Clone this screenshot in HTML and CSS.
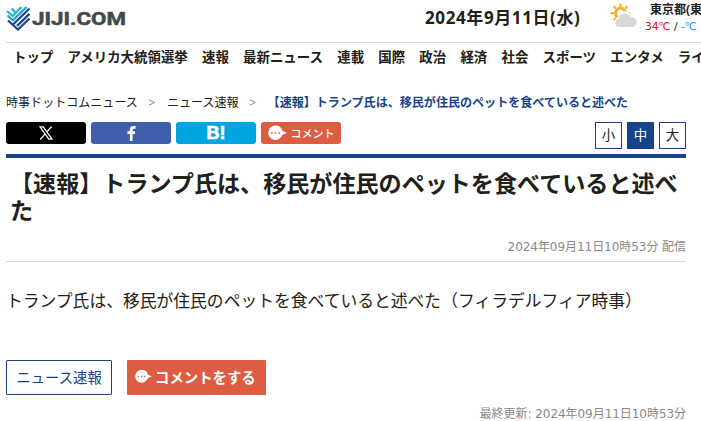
FILE: index.html
```html
<!DOCTYPE html>
<html lang="ja">
<head>
    <meta charset="UTF-8">
    <meta name="viewport" content="width=device-width, initial-scale=1.0">
    <title>【速報】トランプ氏は、移民が住民のペットを食べていると述べた:時事ドットコム</title>
    <link rel="stylesheet" href="styles.css">
</head>
<body>
    <header class="header">
        <a class="logo" href="#">
            <svg width="122" height="26" viewBox="0 0 122 26">
                <g fill="none" stroke-width="2.3">
                    <path stroke="#22b4d0" d="M1 6 L6.5 11 L15.5 2 M5.5 3.5 L9 6.8"/>
                    <path stroke="#20a3c6" d="M1.5 10.5 L7 15.3 L20.5 2"/>
                    <path stroke="#1c4a8d" d="M2 15.5 L12 24.5 L23.5 13.5 M7 19.5 L23.5 3.5 M11 20.8 L23.5 8.8"/>
                </g>
                <text class="logo-text" x="26" y="20" textLength="94" lengthAdjust="spacingAndGlyphs">JIJI.COM</text>
            </svg>
        </a>
        <p class="today">2024年9月11日(水)</p>
        <div class="weather">
            <svg width="28" height="26" viewBox="0 0 28 26">
                <g stroke="#f9ae2b" stroke-width="2">
                    <path d="M10.5 0.5 V4 M10.5 16 V20 M0.5 10.2 H4 M17 10.2 H20.5 M3.5 3.2 L6 5.7 M17.5 3.2 L15 5.7 M3.5 17.2 L6 14.7"/>
                    <circle cx="10.5" cy="10.2" r="5" fill="none" stroke-width="2.8"/>
                </g>
                <path fill="#fff" d="M8 25 A6 6 0 0 1 8 14 A7 7 0 0 1 21 12 A6 6 0 0 1 24 25 Z"/>
                <path fill="#d8d8d8" d="M8.5 24 A4.3 4.3 0 0 1 8.7 15.6 A6.3 6.3 0 0 1 20.8 14.5 A4.8 4.8 0 0 1 23 24 Z"/>
            </svg>
            <div class="weather-info">
                <p class="area">東京都(東京)</p>
                <p class="temp"><span class="high">34℃</span> / <span class="low">-℃</span></p>
            </div>
        </div>
    </header>

    <nav class="nav">
        <a href="#">トップ</a>
        <a href="#">アメリカ大統領選挙</a>
        <a href="#">速報</a>
        <a href="#">最新ニュース</a>
        <a href="#">連載</a>
        <a href="#">国際</a>
        <a href="#">政治</a>
        <a href="#">経済</a>
        <a href="#">社会</a>
        <a href="#">スポーツ</a>
        <a href="#">エンタメ</a>
        <a href="#">ライフ</a>
    </nav>

    <main class="main">
        <div class="breadcrumb">
            <a href="#">時事ドットコムニュース</a>
            <span class="sep">&gt;</span>
            <a href="#">ニュース速報</a>
            <span class="sep">&gt;</span>
            <strong>【速報】トランプ氏は、移民が住民のペットを食べていると述べた</strong>
        </div>

        <div class="tools">
            <div class="share">
                <a class="share-btn x" href="#">
                    <svg width="14" height="14" viewBox="0 0 14 14" fill="none" stroke="#fff" stroke-width="1.2">
                        <path d="M1 0.8 H4.2 L13 13.2 H9.8 Z M12.6 0.5 L7.8 6 M6.2 7.8 L1.2 13.5"/>
                    </svg>
                </a>
                <a class="share-btn facebook" href="#">
                    <svg width="9" height="15" viewBox="0 0 9 15" fill="none" stroke="#fff" stroke-width="2.7">
                        <path d="M8.5 1.4 H6.8 Q4.2 1.4 4.2 4 V15 M0.5 6.7 H8"/>
                    </svg>
                </a>
                <a class="share-btn hatena" href="#">B!</a>
                <a class="share-btn comment" href="#">
                    <svg width="19" height="16" viewBox="0 0 19 16">
                        <path fill="#fff" d="M7.5 0.5 A7.2 7.2 0 0 1 14.5 6 L19 7.7 L14.3 10 A7.2 7.2 0 1 1 7.5 0.5 Z"/>
                        <path stroke="#de5d42" stroke-width="1.6" d="M3 8 H4.6 M6.7 8 H8.3 M10.4 8 H12"/>
                    </svg>
                    コメント
                </a>
            </div>
            <div class="font-size">
                <button>小</button>
                <button class="active">中</button>
                <button>大</button>
            </div>
        </div>

        <article class="article">
            <div class="title-box">
                <h1>【速報】トランプ氏は、移民が住民のペットを食べていると述べた</h1>
                <p class="date">2024年09月11日10時53分 配信</p>
            </div>
            <p class="text">トランプ氏は、移民が住民のペットを食べていると述べた（フィラデルフィア時事）</p>
            <div class="links">
                <a class="category" href="#">ニュース速報</a>
                <a class="post-comment" href="#">
                    <svg width="17" height="15" viewBox="0 0 19 16">
                        <path fill="#fff" d="M7.5 0.5 A7.2 7.2 0 0 1 14.5 6 L19 7.7 L14.3 10 A7.2 7.2 0 1 1 7.5 0.5 Z"/>
                        <path stroke="#de5d42" stroke-width="1.6" d="M3 8 H4.6 M6.7 8 H8.3 M10.4 8 H12"/>
                    </svg>
                    コメントをする
                </a>
            </div>
            <p class="updated">最終更新: 2024年09月11日10時53分</p>
        </article>
    </main>
</body>
</html>
```

FILE: styles.css
```css
* {
    box-sizing: border-box;
    margin: 0;
    padding: 0;
}

body {
    background: #fff;
    color: #222018;
    font-family: "Noto Sans", "Noto Sans CJK JP", sans-serif;
    font-size: 12px;
    overflow: hidden;
}

a {
    color: inherit;
    text-decoration: none;
}

svg {
    display: block;
    flex-shrink: 0;
}

/* Header */
.header {
    display: flex;
    height: 43px;
    margin-left: 6px;
    border-bottom: 1px solid #dcdcdc;
}

.logo {
    flex: 0 0 419px;
    padding-top: 5px;
}

.logo-text {
    font-family: Roboto, sans-serif;
    font-size: 18.5px;
    font-weight: bold;
    fill: #404a4a;
    stroke: #404a4a;
    stroke-width: 0.5px;
}

.today {
    flex: 0 0 185px;
    padding-top: 5px;
    font-size: 17px;
    font-weight: bold;
    line-height: 26px;
    letter-spacing: 0.6px;
    white-space: nowrap;
}

.weather {
    display: flex;
    padding-top: 3px;
}

.weather-info {
    white-space: nowrap;
}

.area {
    margin: -2px 0 0 12px;
    font-weight: bold;
    line-height: 17px;
}

.temp {
    margin-left: 7px;
    font-family: "DejaVu Sans", "Noto Sans CJK JP", sans-serif;
    font-size: 10.7px;
    line-height: 17px;
}

.high {
    color: #f00010;
}

.low {
    color: #0a93f5;
}

/* Global navigation */
.nav {
    display: flex;
    gap: 14.2px;
    padding: 4px 0 0 13px;
    font-size: 13.45px;
    font-weight: bold;
    line-height: 20px;
    white-space: nowrap;
}

.main {
    width: 680px;
    margin-left: 6px;
}

.breadcrumb {
    display: flex;
    padding-top: 27px;
    font-size: 12.05px;
    line-height: 18px;
    white-space: nowrap;
}

.breadcrumb .sep {
    width: 29px;
    padding-right: 1px;
    color: #888;
    text-align: center;
}

.breadcrumb strong {
    color: #174489;
}

/* Share buttons */
.tools {
    display: flex;
    justify-content: space-between;
    height: 36px;
    margin-top: 10px;
    border-bottom: 4px solid #174489;
}

.share,
.font-size {
    display: flex;
    gap: 5px;
}

.share-btn {
    display: flex;
    align-items: center;
    justify-content: center;
    width: 80px;
    height: 22px;
    border-radius: 3px;
    color: #fff;
}

.x {
    background: #000;
}

.facebook {
    background: #3f5fac;
}

.hatena {
    background: #00a5e1;
    font-family: "Liberation Sans", sans-serif;
    font-size: 18px;
    font-weight: bold;
    -webkit-text-stroke: 0.7px #fff;
}

.comment {
    gap: 4px;
    background: #de5d42;
    font-size: 11px;
    font-weight: 500;
}

.font-size button {
    width: 27px;
    height: 27px;
    border: 1px solid #174489;
    background: #fff;
    color: #222018;
    font-family: inherit;
    font-size: 13.4px;
    line-height: 22px;
    padding-bottom: 2px;
}

.font-size .active {
    background: #174489;
    color: #fff;
}

/* Article */
.title-box {
    height: 104px;
    padding-top: 12px;
    border-bottom: 1px solid #dcdcdc;
}

.title-box h1 {
    height: 68px;
    padding-left: 4px;
    font-size: 23.08px;
    line-height: 26.5px;
}

.date,
.updated {
    color: #888;
    font-family: "DejaVu Sans", "Noto Sans CJK JP", sans-serif;
    line-height: 18px;
    letter-spacing: -0.05px;
    text-align: right;
}

.text {
    padding-top: 25px;
    font-size: 16.8px;
    line-height: 27px;
    white-space: nowrap;
}

.links {
    display: flex;
    gap: 15px;
    margin-top: 46px;
}

.category,
.post-comment {
    display: flex;
    align-items: center;
    height: 35px;
    padding-bottom: 2px;
    border-radius: 1px;
    white-space: nowrap;
}

.category {
    justify-content: center;
    width: 106px;
    border: 1px solid #174489;
    color: #174489;
    font-size: 14.4px;
}

.post-comment {
    gap: 3px;
    width: 139px;
    padding-left: 8px;
    background: #de5d42;
    color: #fff;
    font-size: 14.4px;
    font-weight: bold;
}

.updated {
    margin-top: 10px;
}
```
